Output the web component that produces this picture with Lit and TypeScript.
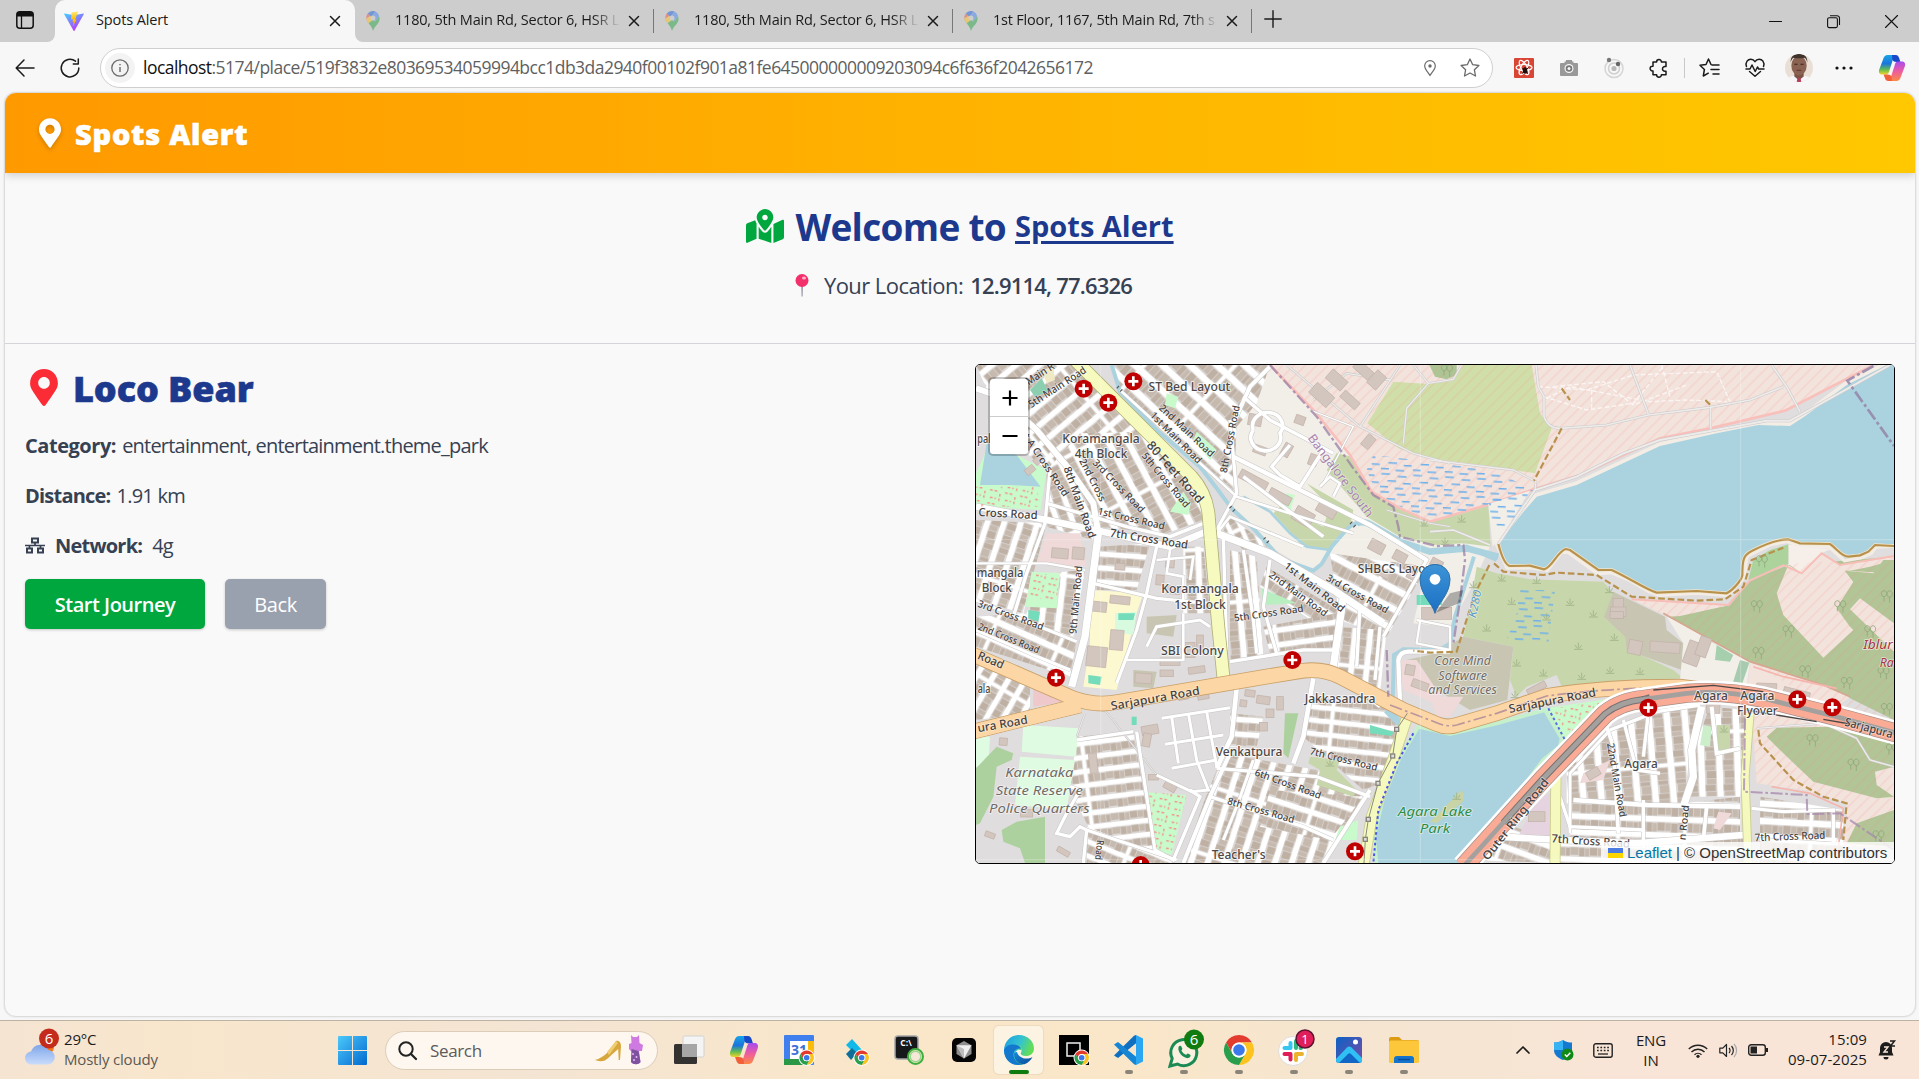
import { LitElement, html, css, svg } from "lit";
import { customElement } from "lit/decorators.js";

type Line = [string, number];
type Label = [string, number, number, number, number, number, string?];

/* ---------- map data (three units per screen pixel) ---------- */

const blocks: [string, number, number][] = [
  ["18,15 320,15 520,215 330,400 230,330 170,280 60,110", -40, 46],
  ["330,220 520,215 700,400 700,480 590,520 380,500 230,330", 62, 52],
  ["230,330 380,500 370,540 230,500", 70, 44],
  ["430,15 900,15 860,130 800,200 790,390 450,90", 43, 56],
  ["18,480 230,490 160,760 18,720", -72, 48],
  ["18,770 160,760 320,840 300,950 18,860", 24, 52],
  ["18,900 180,980 180,1060 18,1080", -60, 44],
  ["230,640 345,630 310,830 160,780", -83, 50],
  ["780,470 900,560 820,570 760,510", 66, 34],
  ["385,560 540,550 500,690 380,690", 4, 42],
  ["640,560 700,560 720,760 640,760", 88, 48],
  ["780,570 860,590 880,890 780,900", 85, 50],
  ["890,620 1120,760 1070,810 870,680", 33, 46],
  ["880,800 1100,760 1100,860 900,880", -8, 44],
  ["1080,580 1370,620 1250,830 1110,780", 28, 54],
  ["1090,800 1250,810 1230,1000 1090,930", 96, 46],
  ["1010,1010 1270,1040 1290,1120 1230,1270 1180,1290 1000,1130", 6, 40],
  ["780,1060 880,1070 860,1160 780,1160", 4, 44],
  ["320,1130 490,1115 550,1470 360,1410 300,1290", -7, 42],
  ["350,1400 620,1500 600,1509 350,1509", 22, 40],
  ["760,1180 1040,1230 1180,1310 1060,1509 640,1509 700,1330", 108, 48],
  ["900,1290 1180,1310 1080,1440 870,1400", 18, 46],
  ["1790,1230 1920,1110 2130,1040 2210,1040 2160,1180 2140,1340 1960,1330 1790,1330", 85, 54],
  ["1800,1330 2140,1330 2310,1310 2310,1430 1800,1440", 2, 48],
  ["1770,1450 2330,1430 2330,1509 1770,1509", 2, 46],
  ["2220,1040 2330,1050 2310,1310 2160,1310 2170,1170", 88, 54],
  ["2370,1310 2620,1350 2620,1509 2370,1509", 3, 52],
  ["1500,1500 1630,1400 1760,1440 1760,1509", 20, 48],
];

const beigeGround = "800,200 900,15 1040,150 1140,285 1205,395 1290,445 1400,500 1560,560 1500,690 1440,800 1330,790 1370,620 1080,580 1030,640 900,560 790,440";

const fills: [string, string][] = [
  ["#f3e3dd", "900,15 1030,150 1140,285 1205,395 1290,445 1380,485 1550,435 1700,385 1830,345 2070,235 2220,205 2445,152 2710,15"],
  ["#d0dfa9", "1270,65 1375,72 1450,62 1480,15 1685,15 1710,160 1745,205 1695,340 1580,322 1380,295 1285,265 1192,190"],
  ["#adc594", "1378,15 1460,15 1460,45 1430,58 1395,50"],
  ["#c8d7ab", "1100,280 1145,290 1205,395 1290,445 1380,485 1555,435 1562,560 1480,550 1390,555 1290,530 1190,470 1070,330"],
  ["#c8d7ab", "1010,370 1150,450 1140,500 1080,570 1000,560 910,460 930,440 1060,500 1080,440"],
  ["#c8d7ab", "1520,620 1580,640 1680,658 1900,665 1930,700 1965,830 1970,865 2110,930 2140,955 2000,962 1780,990 1760,945 1670,980 1640,1010 1620,960 1630,860 1480,830 1500,740"],
  ["#c8c6b3", "1930,695 2085,770 2090,810 2140,850 2135,930 1970,870 1965,830 1902,770"],
  ["#c8c6b3", "1480,830 1630,860 1612,1020 1500,1050 1400,990 1330,960 1310,900 1400,880"],
  ["#f2efe9", "2090,770 2140,790 2230,850 2340,905 2330,980 2130,960 2140,850"],
  ["#a6cfae", "2240,855 2290,885 2280,905 2235,900"],
  ["#a6cbae", "2310,900 2338,908 2310,990 2285,980"],
  ["#b1c597", "2095,770 2280,735 2340,660 2455,615 2772,590 2772,1080 2560,975 2340,905"],
  ["#f3e3dd", "1985,718 2280,735 2130,768 2095,770"],
  ["#f3e3dd", "2455,615 2495,640 2555,580 2610,615 2772,590 2772,600 2700,620 2640,632 2625,632 2650,665 2600,745 2640,800 2650,810 2560,893 2440,765 2420,700"],
  ["#f3e3dd", "2670,715 2772,790 2772,875 2640,748"],
  ["#f3e3dd", "2625,632 2772,640 2772,690 2745,715 2690,670"],
  ["#b1c597", "2650,665 2745,715 2772,690 2772,600 2740,600 2710,640 2625,632"],
  ["#f6eee8", "2455,553 2580,568 2555,580 2495,640 2455,612"],
  ["#acd39c", "2455,553 2455,612 2335,660 2350,600 2400,570"],
  ["#f3e3dd", "2340,905 2560,975 2640,1010 2600,1040 2330,1010"],
  ["#f3e3dd", "2345,1060 2772,1110 2772,1460 2620,1460 2630,1330 2500,1290 2360,1270"],
  ["#b1c597", "2390,1130 2420,1103 2580,1100 2772,1150 2772,1220 2715,1235 2720,1275 2772,1310 2720,1315 2530,1265 2440,1180"],
  ["#b1c597", "2660,1390 2772,1350 2772,1460 2630,1450"],
  ["#c8facc", "18,340 50,270 130,280 230,330 212,450 18,440"],
  ["#aad3df", "50,250 140,285 212,380 120,375 30,375"],
  ["#efd9d9", "230,520 330,520 350,620 200,612"],
  ["#efc8cc", "190,975 240,960 290,1025 190,1040"],
  ["#c8facc", "185,635 270,640 260,745 165,740"],
  ["#c8facc", "680,215 740,270 720,300 670,240"],
  ["#c8facc", "640,395 600,455 655,465 662,430"],
  ["#c8facc", "590,100 625,110 615,145 585,135"],
  ["#8ccfb0", "180,90 215,55 235,95 195,110"],
  ["#efe9c4", "215,30 250,20 255,60 230,70"],
  ["#fcf8cf", "360,690 520,700 500,760 440,990 340,980 360,850"],
  ["#d8fadf", "435,760 500,755 490,825 435,815"],
  ["#74dcba", "445,760 495,760 490,780 445,780"],
  ["#74dcba", "175,750 210,755 205,785 175,775"],
  ["#74dcba", "355,945 395,950 390,975 355,970"],
  ["#c8c6b3", "530,770 620,765 610,830 530,820"],
  ["#c8c6b3", "490,930 560,935 550,985 490,980"],
  ["#dffce2", "160,1095 325,1105 318,1190 155,1175"],
  ["#dffce2", "150,1190 315,1200 290,1350 135,1335"],
  ["#dffce2", "18,1125 60,1130 55,1220 18,1220"],
  ["#add19e", "18,1225 80,1160 130,1180 125,1200 80,1220 70,1310 30,1390 18,1395"],
  ["#add19e", "95,1410 140,1385 225,1370 225,1509 165,1509 150,1465 100,1445"],
  ["#c8facc", "530,1297 650,1305 605,1485 550,1470"],
  ["#add19e", "945,1060 985,1060 955,1195 940,1180"],
  ["#74dcba", "1200,1095 1270,1115 1265,1128 1200,1120"],
  ["#74dcba", "485,1070 500,1070 500,1095 485,1095"],
  ["#c8d7ab", "1020,1190 1110,1200 1100,1230 1160,1290 1150,1310 1040,1275 1050,1230 1015,1210"],
  ["#c8facc", "1110,1400 1165,1380 1160,1440 1095,1440"],
  ["#b9efc0", "875,685 980,730 880,735"],
  ["#c8facc", "950,400 975,405 960,455 932,440"],
  ["#74dcba", "1340,705 1420,705 1415,735 1340,735"],
  ["#c8facc", "1725,1045 1960,1010 1850,1110 1780,1140"],
  ["#cdeecb", "2200,1095 2225,1100 2220,1160 2190,1155"],
  ["#c8d7ab", "2240,1095 2280,1095 2280,1170 2240,1170"],
  ["#e6d3e0", "1700,1320 1740,1300 1740,1430 1640,1440"],
  ["#efd9d9", "1285,900 1340,900 1440,1050 1300,990"],
  ["#efd9d9", "1380,1010 1480,1010 1440,1070 1400,1070"],
  ["#efd9d9", "1840,1240 1920,1200 1900,1260 1830,1270"],
  ["#efd9d9", "2245,1355 2285,1360 2250,1410 2230,1405"],
];

const bigLake =
  "M1585,550 L1665,450 1700,410 1820,375 1980,300 2070,258 2240,220 2365,195 2460,198 2510,165 2630,75 2750,15 2790,0 2790,552 2715,555 2700,575 2670,588 2625,596 2580,555 2490,550 2450,538 2400,548 2325,585 2317,650 2270,700 2180,693 2070,700 2040,690 1980,655 1925,632 1885,635 1795,570 1770,572 1730,625 1680,617 1615,618Z";
const agaraLake =
  "M1345,1100 L1440,1122 1580,1090 1725,1050 1775,1135 1770,1160 1720,1200 1480,1520 1220,1520 1212,1430 1240,1310 1290,1190Z";
const shore =
  "M1585,552 C1595,590 1605,615 1620,618 L1680,617 1722,628 C1745,625 1765,570 1788,567 L1800,570 1885,630 1925,630 C1980,655 2030,690 2060,698 L2180,693 2270,700 C2290,690 2315,660 2317,645 C2317,600 2320,585 2345,573 C2400,545 2430,538 2455,538 L2490,550 2580,552 C2600,565 2615,590 2635,590 L2670,586 2695,575 2715,555 2772,558";

const rivers: Line[] = [
  ["M425,15 L450,95 560,210 690,320 740,385 785,445 850,505 900,560 930,595 1030,632 1055,612 1085,560 1130,508 Q1165,475 1200,492 L1290,545 1380,575 1490,560 1580,600", 12],
  ["M1160,490 Q1180,480 1210,498 L1290,545 1380,575 1490,565 1585,590", 20],
  ["M820,410 L900,455 960,520 1010,560 1080,570", 8],
  ["M1512,590 L1490,660 1455,770 1440,850 1410,870 1300,868 1272,885 1268,1020", 12],
  ["M1250,1050 L1300,1100", 22],
];

const whiteRoads: Line[] = [
  ["M18,85 L90,110 200,210 300,330 370,430 385,520", 18],
  ["M18,440 L230,480 420,520 600,560 720,510", 20],
  ["M230,430 L470,500 600,530 700,490", 10],
  ["M240,330 L225,490 170,640 130,770", 10],
  ["M385,520 L345,830 305,980", 22],
  ["M18,610 L230,610 345,630", 7],
  ["M18,720 L160,780 320,845", 9],
  ["M18,810 L190,885 300,930", 9],
  ["M740,520 L900,580 1090,690 1240,790", 22],
  ["M450,90 L800,410 1150,520", 8],
  ["M740,520 L780,470 1000,560", 8],
  ["M790,290 L1000,395 1200,495 1370,600", 13],
  ["M820,110 L900,180 1090,280", 10],
  ["M780,180 L800,400 740,510", 10],
  ["M900,20 L840,80 790,190", 12],
  ["M850,210 a45,40 0 1 0 80,10 a45,40 0 1 0 -80,-10", 11],
  ["M960,255 L905,320 930,345 990,380 1060,270", 10],
  ["M1050,380 L1080,350 1110,370 1090,410", 8],
  ["M820,350 L1060,530", 10],
  ["M1020,150 L1150,200 1060,370", 4],
  ["M1200,495 L1370,600 1240,830", 10],
  ["M820,570 L850,780 860,880", 10],
  ["M760,530 L770,870", 10],
  ["M900,600 L880,740 920,880", 10],
  ["M1120,710 L1090,920", 22],
  ["M1170,740 L1160,920", 10],
  ["M1230,800 L1215,960", 10],
  ["M780,905 L1000,870 1090,870", 10],
  ["M370,670 L560,715 710,730", 10],
  ["M560,560 L530,700 500,810 440,970", 10],
  ["M530,860 L560,800 690,780 720,800", 9],
  ["M640,760 L640,900 470,900", 8],
  ["M600,570 L590,640 640,650 640,720", 8],
  ["M560,600 L670,590 660,660", 8],
  ["M800,985 L785,1130 740,1225", 14],
  ["M575,1075 L780,1043", 9],
  ["M585,1153 L760,1125", 9],
  ["M605,1225 L740,1200", 9],
  ["M605,1070 L625,1210", 9],
  ["M655,1060 L680,1200 715,1290 665,1295 560,1245", 9],
  ["M710,1055 L740,1220", 9],
  ["M500,1115 L555,1470 610,1500 690,1310 660,1290", 10],
  ["M320,1140 L490,1115", 10],
  ["M300,1280 L330,1290 290,1360 260,1420 300,1430 330,1400 350,1410 620,1500", 10],
  ["M350,1410 L340,1509", 10],
  ["M1030,955 L1000,1130 970,1210", 14],
  ["M740,1225 L1040,1250 1200,1310", 10],
  ["M780,1180 L720,1310 640,1509", 12],
  ["M720,1310 L1000,1400 1090,1440", 10],
  ["M850,1200 L800,1340 760,1440", 9],
  ["M1200,1290 L1060,1509", 12],
  ["M1090,930 L1230,1040", 10],
  ["M1290,1030 L1285,900 Q1290,875 1315,875 L1440,875", 13],
  ["M1340,780 L1440,800 1440,870 1340,850 1350,785", 7],
  ["M1910,1100 L1930,1160 1945,1420", 11],
  ["M1960,1080 L2000,1230 2070,1240", 10],
  ["M2035,1060 L2020,1190", 10],
  ["M1920,1110 L2060,1055 2190,1035", 10],
  ["M1920,1110 L1800,1240 1800,1420", 9],
  ["M2195,1040 L2165,1170 2170,1250 2140,1340", 22],
  ["M2225,1040 L2240,1180 2310,1165", 12],
  ["M1810,1320 L2030,1335 2310,1340", 14],
  ["M2020,1320 L2020,1509", 10],
  ["M1770,1310 L1800,1400 2020,1410", 10],
  ["M1590,1430 L1770,1440 2000,1450 2320,1425", 20],
  ["M2210,1340 L2200,1440", 11],
  ["M2345,1345 L2440,1355 2590,1350 2590,1450", 10],
  ["M2360,1425 L2600,1440", 12],
];

const greyTracks: Line[] = [
  ["M1698,15 L1705,80 1722,110 1722,170 Q1735,205 1770,205 L1910,195 2035,165 2220,142 2340,120 2440,80", 6],
  ["M1980,15 L2035,162", 6],
  ["M2405,15 L2450,80 2490,155", 6],
  ["M2222,142 L2222,208", 6],
  ["M1585,552 L1640,470 1695,390 1820,350 1960,280 2070,240 2390,182 2460,182 2500,160 2760,15", 7],
  ["M1380,300 L1630,330 1698,365 1695,390", 5],
  ["M1170,200 L1330,280 1440,310", 5],
  ["M1380,515 L1450,510 1560,555", 6],
  ["M950,15 L1170,200 1235,100 1290,15", 5],
  ["M1330,15 L1375,70 1310,145 1300,250", 5],
  ["M1375,70 L1450,58 1475,15", 5],
  ["M1030,120 L1130,40 1260,60", 5],
  ["M2360,1105 L2560,1090 2660,1135 2700,1200 2772,1220", 5],
  ["M1250,450 L1380,490 1440,500", 4],
  ["M400,1045 L560,1245 640,1290", 4],
  ["M345,1060 L320,1130", 4],
];

const houses: [number, number, number, number, number][] = [
  [1055, 105, 70, 40, 42], [1100, 60, 60, 36, 42], [1180, 30, 60, 30, 42], [1140, 120, 60, 26, 42],
  [1220, 60, 36, 50, 42], [1195, 245, 40, 28, -50], [1000, 470, 60, 44, 30], [1070, 450, 60, 34, 30],
  [850, 360, 90, 28, 28], [930, 410, 70, 26, 28], [855, 180, 40, 34, 10], [950, 270, 26, 40, 30],
  [540, 1110, 50, 28, -10], [530, 1140, 24, 40, 10], [600, 1280, 38, 22, 30], [550, 1252, 30, 16, 0],
  [440, 840, 40, 60, 5], [380, 890, 60, 60, 6], [385, 740, 50, 30, 6], [450, 720, 60, 24, 6],
  [520, 955, 50, 30, 4], [1400, 760, 90, 36, 0], [1945, 745, 32, 60, 0], [1945, 755, 46, 28, 0],
  [1995, 862, 40, 42, 12], [2085, 862, 90, 32, 4], [1940, 765, 40, 20, 0], [1700, 985, 60, 20, -28],
  [2170, 880, 46, 70, 20], [2200, 860, 34, 60, 20], [2390, 985, 60, 30, 2], [2480, 1000, 80, 22, 14],
  [2230, 1040, 40, 40, 0], [100, 1145, 24, 22, 5], [170, 1360, 36, 22, 0], [60, 1425, 30, 16, 20],
  [280, 1475, 40, 16, 30], [370, 1210, 24, 60, -6], [880, 1020, 40, 24, 8], [930, 1030, 20, 40, 0],
  [1320, 930, 28, 30, 10], [1350, 975, 50, 24, 20], [1700, 1370, 50, 30, 0], [1870, 1240, 40, 26, -30],
  [270, 580, 50, 30, 5], [325, 580, 36, 36, 5], [1220, 560, 46, 34, 28], [1290, 590, 40, 30, 28],
  [990, 180, 30, 26, 20], [1030, 300, 26, 34, 20], [870, 270, 40, 24, 20],
  [600, 610, 26, 26, 5], [610, 690, 40, 24, 5], [570, 660, 24, 30, 5], [660, 870, 30, 46, 0],
  [690, 850, 20, 50, 0], [600, 905, 60, 22, 0], [590, 940, 40, 20, 0], [680, 930, 50, 20, -8],
  [640, 1010, 30, 18, -10], [700, 1010, 34, 16, -10], [840, 1000, 30, 20, 8], [900, 1060, 24, 26, 0],
  [880, 1100, 24, 26, 0], [820, 1030, 20, 20, 8], [1330, 650, 40, 22, 28], [1400, 610, 36, 24, 28],
  [1240, 640, 40, 22, 28], [450, 620, 30, 20, 4], [180, 330, 30, 20, -40], [205, 300, 28, 20, -40],
];

const places: Label[] = [
  ["ST Bed Layout", 658, 93, 0, 245, 37],
  ["Koramangala", 393, 248, 0, 232, 37],
  ["4th Block", 393, 293, 0, 158, 37],
  ["pal", 42, 248, 0, 40, 37],
  ["mangala", 90, 650, 0, 140, 37],
  ["Block", 80, 697, 0, 90, 37],
  ["Koramangala", 690, 700, 0, 232, 37],
  ["1st Block", 690, 747, 0, 155, 37],
  ["SHBCS Layout", 1283, 640, 0, 240, 37],
  ["SBI Colony", 667, 885, 0, 188, 37],
  ["Jakkasandra", 1110, 1028, 0, 212, 37],
  ["Venkatpura", 837, 1187, 0, 200, 37],
  ["Teacher's", 806, 1496, 0, 162, 37],
  ["ala", 42, 998, 0, 38, 37],
  ["Agara", 2013, 1223, 0, 100, 37],
  ["Agara", 2223, 1020, 0, 102, 35],
  ["Agara", 2362, 1020, 0, 102, 35],
  ["Flyover", 2362, 1066, 0, 122, 35],
];

const streets: Label[] = [
  ["80 Feet Road", 614, 348, 48, 235, 37],
  ["2nd Main Road", 650, 222, 43, 215, 30],
  ["1st Main Road", 618, 243, 45, 205, 30],
  ["8th Cross Road", 780, 247, -79, 205, 30],
  ["5th Cross Road", 587, 370, 50, 205, 30],
  ["8th Main Road", 328, 437, 70, 225, 32],
  ["2nd Cross", 368, 370, 63, 140, 30],
  ["3rd Cross Road", 446, 388, 46, 210, 30],
  ["1st Cross Road", 484, 486, 13, 205, 30],
  ["7th Cross Road", 537, 548, 9, 236, 34],
  ["t A Cross Road", 228, 325, 56, 220, 30],
  ["Cross Road", 114, 473, 3, 177, 34],
  ["5th Main Road", 262, 92, -33, 200, 32],
  ["Main R", 210, 52, -33, 96, 32],
  ["3rd Cross Road", 122, 776, 20, 208, 30],
  ["2nd Cross Road", 116, 845, 22, 196, 30],
  ["9th Main Road", 318, 730, -85, 205, 31],
  ["1st Main Road", 1033, 692, 38, 222, 31],
  ["2nd Main Road", 985, 712, 36, 208, 30],
  ["3rd Cross Road", 1162, 712, 29, 208, 30],
  ["5th Cross Road", 896, 770, -8, 210, 30],
  ["Sarjapura Road", 556, 1027, -10, 270, 35],
  ["Road", 62, 912, 23, 82, 35],
  ["ura Road", 98, 1104, -10, 152, 35],
  ["7th Cross Road", 1121, 1208, 14, 208, 30],
  ["6th Cross Road", 954, 1282, 20, 210, 30],
  ["8th Cross Road", 873, 1361, 16, 208, 30],
  ["Road", 388, 1480, 95, 60, 30],
  ["Sarjapura Road", 1747, 1034, -11, 265, 35],
  ["Outer Ring Road", 1638, 1389, -52, 300, 34],
  ["Sarjapura", 2696, 1116, 15, 148, 35],
  ["22nd Main Road", 1940, 1270, 80, 225, 30],
  ["n Road", 2142, 1398, -84, 105, 30],
  ["7th Cross Road", 1862, 1455, 4, 236, 34],
  ["7th Cross Road", 2460, 1440, -2, 212, 32],
];

const accents: Label[] = [
  ["Bangalore South", 1110, 358, 53, 300, 37, "violet"],
  ["Karnataka", 208, 1252, 0, 205, 39, "estate"],
  ["State Reserve", 208, 1305, 0, 262, 39, "estate"],
  ["Police Quarters", 208, 1359, 0, 302, 39, "estate"],
  ["Core Mind", 1478, 915, 0, 170, 36, "estate"],
  ["Software", 1478, 960, 0, 146, 36, "estate"],
  ["and Services", 1478, 1003, 0, 206, 36, "estate"],
  ["Agara Lake", 1395, 1367, 0, 222, 40, "park"],
  ["Park", 1395, 1419, 0, 92, 40, "park"],
  ["K280", 1516, 742, -78, 84, 33, "stream"],
  ["Iblur", 2724, 867, 0, 88, 38, "reserve"],
  ["Ra", 2750, 920, 0, 42, 38, "reserve"],
];

const hospitals = [
  [341, 86], [415, 128], [490, 64], [258, 953], [967, 900], [1155, 1474],
  [512, 1515], [2035, 1043], [2482, 1018], [2587, 1042],
];

const trees = [
  [2360, 740], [2455, 815], [2365, 880], [2505, 935], [2630, 970], [2527, 1142], [2650, 1215],
  [2725, 1430], [2750, 1048], [1430, 32], [2375, 605], [2610, 740], [2750, 710], [2700, 815], [2740, 940], [2765, 1170],
];
const tufts = [
  [1475, 478], [1425, 545], [1625, 725], [1800, 728], [1870, 763], [1550, 805], [1730, 772], [1640, 910],
  [1825, 860], [1933, 833], [1920, 932], [2010, 935], [1835, 950], [1720, 940], [1595, 655], [1700, 662],
  [1918, 690], [1635, 1005], [2262, 1108], [1460, 1310], [1362, 490], [1080, 1210], [1510, 675],
];

const label = ([t, x, y, a, len, size, cls]: Label) => svg`<text class=${cls ?? "name"} x=${x} y=${y} font-size=${size}
  textLength=${len} lengthAdjust="spacingAndGlyphs" transform=${`rotate(${a} ${x} ${y - (a ? 10 : 0)})`}>${t}</text>`;

const stroke = (list: Line[], color: string, extra = 0) =>
  list.map(([d, w]) => svg`<path d=${d} fill="none" stroke=${color} stroke-width=${w + extra}></path>`);

const wide = (d: string, w: number, color: string, casing: string) => svg`
  <path d=${d} fill="none" stroke=${casing} stroke-width=${w + 5}></path>
  <path d=${d} fill="none" stroke=${color} stroke-width=${w}></path>`;

/* Rows of houses between parallel lanes, tiled over each quarter. */
const housePattern = (i: number, angle: number, pitch: number) => {
  const lane = pitch * 0.34;
  const h = pitch - lane - 5;
  const widths = [16, 22, 13, 26, 18, 14, 24, 17, 21, 15];
  let x = 0;
  const rects = widths.map((w, k) => {
    const r = svg`<rect x=${x + 1} y=${lane + 2 + (k % 3)} width=${w - 2} height=${h - (k % 4)} fill=${k % 2 ? "#c6b9ae" : "#bfb0a4"}></rect>`;
    x += w;
    return r;
  });
  return svg`<pattern id=${"q" + i} patternUnits="userSpaceOnUse" width=${x + 14} height=${pitch}
    patternTransform=${`rotate(${angle})`}>
    <rect width=${x + 14} height=${pitch} fill="#dddad8"></rect>${rects}
    <rect width=${x + 14} height=${lane} fill="#fff"></rect>
    <rect x=${x + 2} width="10" height=${pitch} fill="#fff"></rect></pattern>`;
};

const road80 = "M310,-5 L425,110 540,225 665,350 Q714,405 717,480 L745,800 760,950";
const sarjapura = "M0,880 L310,1015 Q380,1040 450,1025 L900,948 1000,932 Q1060,925 1110,950 L1300,1050 1400,1092 Q1430,1105 1460,1095 L1580,1060 1730,1008 Q1900,980 2130,980 L2230,992";
const sarjapuraW = "M0,1117 L330,1036";
const ring = "M1480,1520 L1720,1255 1905,1062 Q1950,1025 2020,1018 L2150,1000 Q2260,990 2380,1015 L2600,1070 2790,1122";

@customElement("street-map")
class StreetMap extends LitElement {
  static styles = css`
    :host { display: block; width: 918px; height: 498px; }
    svg { display: block; width: 918px; height: 498px; }
    text { font-family: "Noto Sans", "Open Sans", sans-serif; text-anchor: middle; paint-order: stroke; stroke-linejoin: round; }
    .name { fill: #4a4848; font-weight: 500; stroke: rgba(255, 255, 255, 0.75); stroke-width: 6px; }
    .street { fill: #434141; font-weight: 500; stroke: rgba(255, 255, 255, 0.45); stroke-width: 5px; }
    .violet { fill: #a884ad; stroke: rgba(255, 255, 255, 0.5); stroke-width: 4px; }
    .estate { fill: #6f6b67; font-style: italic; stroke: rgba(255, 255, 255, 0.6); stroke-width: 5px; }
    .park { fill: #2f8d43; font-style: italic; stroke: rgba(255, 255, 255, 0.5); stroke-width: 5px; }
    .stream { fill: #5a9bc8; font-style: italic; stroke: rgba(255, 255, 255, 0.6); stroke-width: 4px; }
    .reserve { fill: #a8323f; font-style: italic; stroke: rgba(255, 255, 255, 0.6); stroke-width: 5px; }
  `;
  render() {
    return html`<svg viewBox="18 15 2754 1494">
      <defs>
        ${blocks.map(([, a, p], i) => housePattern(i, a, p))}
        <pattern id="hatch" patternUnits="userSpaceOnUse" width="24" height="24" patternTransform="rotate(45)">
          <rect width="5" height="24" fill="#f08c82" opacity=".17"></rect>
        </pattern>
        <pattern id="wet" patternUnits="userSpaceOnUse" width="96" height="54" patternTransform="rotate(3)">
          <path d="M2,6h26M52,12h26M22,26h26M68,32h24M0,44h24M44,48h26" stroke="#6cb0ec" stroke-width="4.5"></path>
        </pattern>
        <pattern id="play" patternUnits="userSpaceOnUse" width="46" height="40" patternTransform="rotate(12)">
          <path d="M2,8h26M34,14v22M6,30h18" stroke="#f78d85" stroke-width="4" stroke-dasharray="8 6"></path>
        </pattern>
        <linearGradient id="pin" x1="0" y1="0" x2="0" y2="1">
          <stop offset="0" stop-color="#3d94d6"></stop><stop offset="1" stop-color="#1b6fc4"></stop>
        </linearGradient>
      </defs>
      <rect x="18" y="15" width="2754" height="1494" fill="#dfdddd"></rect>
      <polygon points=${beigeGround} fill="#f2efe9"></polygon>
      ${blocks.map(([p], i) => svg`<polygon points=${p} fill=${`url(#q${i})`}></polygon>`)}
      ${fills.map(([c, p]) => svg`<polygon points=${p} fill=${c}></polygon>`)}
      <polygon points="900,15 1030,150 1140,285 1205,395 1290,445 1380,485 1550,435 1700,385 1830,345 2070,235 2220,205 2445,152 2710,15" fill="url(#hatch)"></polygon>
      <path d="M900,15 L1030,150 1140,285 1205,395 1290,445 1380,485 1550,435 1700,385 1830,345 2070,235 2220,205 2445,152 2710,15" fill="none" stroke="#f9c0bb" stroke-width="8"></path>
      <polygon points="1985,718 2280,735 2455,612 2772,590 2772,1460 2620,1460 2630,1330 2500,1290 2360,1270 2345,1060 2600,1060 2340,905 2095,770" fill="url(#hatch)"></polygon>
      <path d="M1985,718 L2275,735 2340,662 2440,615 2495,640 2555,580 2610,615 2772,588" fill="none" stroke="#f7bdb6" stroke-width="6"></path>
      <path d="M2080,760 L2340,905 2560,975 2640,1010" fill="none" stroke="#d7a68f" stroke-width="5"></path>
      <path d="M2350,920 L2440,950 2600,985M2405,1280 L2520,1300 2620,1345 2600,1500" fill="none" stroke="#f5b5ad" stroke-width="5"></path>
      <polygon points="1210,285 1380,305 1580,335 1690,392 1550,435 1390,480 1300,445 1220,400 1190,330" fill="url(#wet)"></polygon>
      <polygon points="1555,432 1680,392 1600,520 1568,560" fill="#f2efe9"></polygon>
      <polygon points="1555,420 1680,392 1620,500 1568,500" fill="url(#wet)"></polygon>
      <polygon points="1650,690 1755,690 1735,850 1610,840 1640,760" fill="url(#wet)"></polygon>
      <g fill="none" stroke="#fff" stroke-width="4" stroke-dasharray="14 7" opacity=".7">
        <path d="M1705,80 L1850,90 1990,45 2240,35 2280,125"></path>
        <path d="M1730,115 L1800,80 2040,125 2150,120 2270,125"></path>
        <path d="M1722,110 L1850,150 1990,130 2080,20"></path>
        <path d="M1750,80 L1900,65 1990,135 2150,75"></path>
        <path d="M1865,90 V150M2075,15 L2100,110"></path>
      </g>
      <path d=${bigLake} fill="#abd3df" stroke="#f4ede6" stroke-width="22"></path>
      <path d=${bigLake} fill="#abd3df"></path>
      <path d=${agaraLake} fill="#abd3df" stroke="#c5f0cb" stroke-width="12"></path>
      <polygon points="1380,1385 1475,1290 1482,1305 1478,1325 1400,1390" fill="#c8d3a6"></polygon>
      ${stroke(greyTracks, "#cbc8c8", 2)}
      ${stroke(greyTracks, "#eeebeb", -1)}
      ${houses.map(([x, y, w, h, a]) => svg`<rect x=${x - w / 2} y=${y - h / 2} width=${w} height=${h} fill="#d3c6bf" stroke="#c0b0a6" stroke-width="2" transform=${`rotate(${a} ${x} ${y})`}></rect>`)}
      ${stroke(rivers, "#abd3df")}
      ${stroke(whiteRoads, "#c9c7c6", 3)}
      ${stroke(whiteRoads, "#fff")}
      <polygon points="185,640 270,645 260,720 165,710" fill="url(#play)"></polygon>
      <polygon points="535,1297 650,1305 605,1480 555,1465" fill="url(#play)"></polygon>
      <polygon points="18,380 200,380 212,440 18,440" fill="url(#play)"></polygon>
      <polygon points="1745,1045 1940,1020 1850,1100 1790,1120" fill="url(#play)"></polygon>
      ${wide("M1315,1060 L1272,1190 1205,1370 1180,1520", 30, "#f5f9bd", "#c9cb8e")}
      ${wide("M1758,1230 L1755,1520", 28, "#f5f9bd", "#c9cb8e")}
      ${wide("M2340,1060 L2325,1250 2335,1520", 22, "#f5f9bd", "#c9cb8e")}
      ${wide(road80, 36, "#f7fabf", "#b0b17a")}
      ${wide(sarjapuraW, 42, "#fcd6a4", "#c9a06a")}
      ${wide(sarjapura, 42, "#fcd6a4", "#c9a06a")}
      <path d="M10,1115 L330,1036" stroke="#fcd6a4" stroke-width="42"></path>
      <path d="M1260,1035 L1400,1088 Q1430,1102 1460,1095 L1580,1060 1730,1008 Q1900,985 2120,982" fill="none" stroke="#a6809a" stroke-width="5" stroke-dasharray="38 10 8 10" opacity=".75"></path>
      <path d=${ring} fill="none" stroke="#fff" stroke-width="72"></path>
      <path d=${ring} fill="none" stroke="#a38d86" stroke-width="57"></path>
      <path d=${ring} fill="none" stroke="#f9ab95" stroke-width="53"></path>
      <path d="M1600,1388 L1720,1255 1905,1062 Q1950,1025 2020,1018 L2040,1012" fill="none" stroke="#77716f" stroke-width="20"></path>
      <path d=${ring} fill="none" stroke="#a3a09e" stroke-width="14"></path>
      <path d="M2050,990 L2230,976 2380,995M2330,1050 L2540,1085M2560,1078 L2640,1092" fill="none" stroke="#4b4746" stroke-width="4"></path>
      <path d="M2325,1075 L2322,1295 2510,1305 2512,1362 2610,1360 2772,1470" fill="none" stroke="#a98cb0" stroke-width="6" stroke-dasharray="36 8 8 8" opacity=".8"></path>
      <path d="M900,15 L1040,170 1150,325 1210,405 1270,440 1285,500 1290,530 1400,558 1480,555 1485,600 1470,720 1450,850 M1250,870 L1255,1010" fill="none" stroke="#9a7fa6" stroke-width="7" stroke-dasharray="34 9 9 9" opacity=".75"></path>
      <path d="M2710,18 L2632,62 2772,258" fill="none" stroke="#9384a8" stroke-width="8" stroke-dasharray="38 9 9 9" opacity=".85"></path>
      <path d=${shore} fill="none" stroke="#f1e6cf" stroke-width="11"></path>
      <path d=${shore} fill="none" stroke="#b8924c" stroke-width="6.5"></path>
      <g fill="none" stroke="#b8924c" stroke-width="6.5" stroke-dasharray="20 9">
        <path d="M1572,610 L1600,635 1720,645 1760,638 1880,645 1985,710 2180,722 2265,718 2320,680 2345,600 2440,563"></path>
        <path d="M1558,615 L1515,700 1480,810 1460,875 1380,878 1330,872"></path>
        <path d="M1775,205 L1692,362"></path>
        <path d="M1775,85 L1800,120M2206,120 L2222,136"></path>
        <path d="M2365,1110 L2370,1150 2470,1260 2560,1310 2630,1330 2620,1440"></path>
      </g>
      <path d="M1330,1120 L1280,1210 1225,1350 1210,1509" fill="none" stroke="#4a55ec" stroke-width="6" stroke-dasharray="8 8"></path>
      <path d="M1735,1045 L1785,1140" fill="none" stroke="#5a6bea" stroke-width="6" stroke-dasharray="8 8"></path>
      <path d="M1312,1060 L1280,1108 1268,1188 1224,1270 1195,1378 1186,1438 1182,1509" fill="none" stroke="#8c8c80" stroke-width="3"></path>
      ${[[1280, 1108], [1268, 1188], [1224, 1270], [1195, 1378], [1186, 1438]].map(([x, y]) => svg`<rect x=${x - 6} y=${y - 6} width="12" height="12" fill="#ddd" stroke="#88867c" stroke-width="4"></rect>`)}
      ${[[450, 88], [788, 448], [890, 542], [1150, 495]].map(([x, y]) => svg`<path d=${`M${x - 10},${y - 3} l7,-7 M${x},${y + 7} l7,-7`} stroke="#555" stroke-width="3.5"></path>`)}
      ${trees.map(([x, y]) => svg`<path d=${`M${x - 8},${y + 14} v-14 m0,0 a8,9 0 1 1 .1,0 M${x + 9},${y + 18} v-16 m0,0 a8,10 0 1 1 .1,0`} fill="none" stroke="#8fa87c" stroke-width="2.5"></path>`)}
      ${tufts.map(([x, y]) => svg`<path d=${`M${x - 13},${y + 8} h26 M${x},${y + 6} v-18 M${x - 3},${y + 5} l-7,-10 M${x + 3},${y + 5} l7,-10`} fill="none" stroke="#9db185" stroke-width="2.5"></path>`)}
      <path d="M392,15 V1509M1351,15 V1509M2312,15 V1509M18,539 H2772M18,1499 H2772" stroke="#fff" stroke-width="2" opacity=".4"></path>
      ${streets.map((l) => label([l[0], l[1], l[2], l[3], l[4], l[5], "street"]))}
      ${places.map(label)}
      ${accents.map(label)}
      ${hospitals.map(([x, y]) => svg`<circle cx=${x} cy=${y} r="27" fill="#bf0000"></circle><path d=${`M${x - 15},${y} h30 M${x},${y - 15} v30`} stroke="#fff" stroke-width="8"></path>`)}
      <path d="M1398,758 L1440,700 1480,690 1470,728Z" fill="#000" opacity=".28"></path>
      <path d="M1395,760 C1388,730 1350,705 1350,657 A45,44 0 0 1 1440,657 C1440,705 1402,730 1395,760Z" fill="url(#pin)" stroke="#2c6ea6" stroke-width="3"></path>
      <circle cx="1395" cy="658" r="16" fill="#fff"></circle>
    </svg>`;
  }
}

/* ---------- icons ---------- */

const pinPath = "M172.268 501.67C26.97 291.031 0 269.413 0 192 0 85.961 85.961 0 192 0s192 85.961 192 192c0 77.413-26.97 99.031-172.268 309.67-9.535 13.774-29.93 13.773-39.464 0zM192 272c44.183 0 80-35.817 80-80s-35.817-80-80-80-80 35.817-80 80 35.817 80 80 80z";
const mapPath = "M288 0c-69.59 0-126 56.41-126 126 0 56.26 82.35 158.8 113.9 196.02 6.39 7.54 17.82 7.54 24.2 0C331.65 284.8 414 182.26 414 126 414 56.41 357.59 0 288 0zm0 168c-23.2 0-42-18.8-42-42s18.8-42 42-42 42 18.8 42 42-18.8 42-42 42zM20.12 215.95A32.006 32.006 0 0 0 0 245.66v250.32c0 11.32 11.43 19.06 21.94 14.86L160 448V214.92c-8.84-15.98-16.07-31.54-21.25-46.42L20.12 215.95zM288 359.67c-14.07 0-27.38-6.18-36.51-16.96-19.66-23.2-40.57-49.62-59.49-76.72v182l192 64V266c-18.92 27.09-39.82 53.52-59.49 76.72-9.13 10.77-22.44 16.95-36.51 16.95zm266.06-198.51L416 224v288l139.88-55.95A31.996 31.996 0 0 0 576 426.34V176.02c0-11.32-11.43-19.06-21.94-14.86z";

const icon = (w: number, h: number, body: unknown, vb = `0 0 ${w} ${h}`) =>
  html`<svg class="icon" width=${w} height=${h} viewBox=${vb} fill="none">${body}</svg>`;

const line = (d: string, w = 1.5, c = "#1b1b1b") =>
  svg`<path d=${d} stroke=${c} stroke-width=${w} stroke-linecap="round" stroke-linejoin="round"></path>`;

const closeX = icon(12, 12, line("M1.5 1.5l9 9M10.5 1.5l-9 9", 1.5));

const mapsPin = icon(14, 20, svg`<g opacity=".62">
  <path d="M7 20C6.3 16.5 3 13 1.4 10.6L5 7l4 3.5 4-5.6c1.6 4-.3 6.7-2 8.9C9.5 15.5 7.7 17.6 7 20Z" fill="#4aae62"></path>
  <path d="M1.4 10.6C-.2 8 0 4.8 1.7 2.6L6 6.2Z" fill="#ea6a5e"></path>
  <path d="M1.4 10.6C.8 9.6.4 8.6.3 7.6L4.5 4.8 7 9 2.6 12.3Z" fill="#f6c445"></path>
  <path d="M1.7 2.6A7 7 0 0 1 9.5.5L5.5 6Z" fill="#3f75d8"></path>
  <path d="M9.5.5A7 7 0 0 1 13.2 4.9L9 10.3 5.5 6Z" fill="#5f95ee"></path></g>
  <circle cx="7" cy="7" r="2.5" fill="#cdcdcd"></circle>`);

const copilot = (s: number) => icon(s, s, svg`
  <defs>
    <linearGradient id="ca" x1="0" y1="0" x2="0" y2="1"><stop offset="0" stop-color="#16a5e8"></stop><stop offset=".45" stop-color="#1b74dd"></stop><stop offset=".75" stop-color="#62bd51"></stop><stop offset="1" stop-color="#f4d22b"></stop></linearGradient>
    <linearGradient id="cb" x1="0" y1="0" x2="0" y2="1"><stop offset="0" stop-color="#a64bf0"></stop><stop offset=".5" stop-color="#ee5ca0"></stop><stop offset="1" stop-color="#fb8a45"></stop></linearGradient>
  </defs>
  <path d="M17 1H10.5C7.5 1 6.3 3 5.5 5.6L1.3 16.5C.3 20 1.5 22 5 22h3.5c2 0 2.7-1 3.3-3L16 6c.6-1.8 1.4-2.5 3-2.5Z" fill="url(#ca)"></path>
  <path d="M15 1h4c2 0 3 1.3 3.7 3.5L24 8.5h-4c-3 0-4-1-4.6-3Z" fill="#1948c9"></path>
  <path d="M13 29h6.5c3 0 4.2-2 5-4.6l4.2-10.9C29.7 10 28.5 8 25 8h-3.5c-2 0-2.7 1-3.3 3L14 24c-.6 1.8-1.4 2.5-3 2.5Z" fill="url(#cb)"></path>
  <path d="M15 29h-4c-2 0-3-1.3-3.7-3.5L6 22h4c3 0 4 1 4.6 3Z" fill="#f2603a"></path>`, "0 0 30 30");

const chromeBody = svg`
  <circle cx="15" cy="15" r="15" fill="#fff"></circle>
  <path d="M2 7.5A15 15 0 0 1 28 7.5L15 7.5A7.5 7.5 0 0 0 8.5 18.7Z" fill="#e33b2e"></path>
  <path d="M28 7.5A15 15 0 0 1 15 30L21.5 18.7A7.5 7.5 0 0 0 15 7.5Z" fill="#fcc31e"></path>
  <path d="M15 30A15 15 0 0 1 2 7.5L8.5 18.7A7.5 7.5 0 0 0 21.5 18.7Z" fill="#2a9e4b"></path>
  <circle cx="15" cy="15" r="7.5" fill="#fff"></circle><circle cx="15" cy="15" r="5.8" fill="#3b78ea"></circle>`;
const chromeMini = svg`<g transform="translate(15.5 15.5) scale(.48)"><circle cx="15" cy="15" r="17" fill="#fff"></circle>${chromeBody}</g>`;

const apps: { art: unknown; active?: boolean; dot?: boolean }[] = [
  { art: icon(30, 30, svg`<rect x="9" y="1" width="21" height="21" rx="1.5" fill="#f4f4f4" stroke="#d2d2d2"></rect><rect y="9" width="23" height="20" rx="1.5" fill="#333231"></rect><rect x="8" y="9" width="15" height="13" fill="#a6a6a6"></rect>`) },
  { art: copilot(30) },
  { art: icon(30, 30, svg`<rect width="30" height="30" rx="1" fill="#4080ee"></rect><path d="M24 6h6v18l-6 6Z" fill="#fbbc0a"></path><path d="M0 24h24v6H0Z" fill="#2b9848"></path><rect x="6" y="6" width="18" height="18" fill="#fff"></rect><text class="calendar" x="15" y="20">31</text>${chromeMini}`) },
  { art: icon(30, 30, svg`<path d="M13 4l10 11-5 6L7 10Z" fill="#12b9e8"></path><path d="M13 13l5 5-6 7-5-6Z" fill="#0f6f9b"></path>${chromeMini}`) },
  { art: icon(30, 30, svg`<rect x="1" y="1" width="23" height="23" rx="3" fill="#17181a" stroke="#a5a5a5" stroke-width="1.5"></rect><text class="prompt" x="12" y="11">C:\\</text><circle cx="21.5" cy="21.5" r="7.5" fill="#f7ead0" stroke="#3fae3f" stroke-width="2"></circle><circle cx="21.5" cy="21.5" r="5.3" fill="#f5e8d6" stroke="#9bd68d" stroke-width="1.5"></circle>`) },
  { art: icon(30, 30, svg`<rect x="3" y="3" width="24" height="24" rx="5" fill="#050505"></rect><path d="M15 6l7.5 4.3v8.7L15 23.5 7.5 19v-8.7Z" fill="#8f8f8f"></path><path d="M7.5 10.3h15L15 23.5Z" fill="#efefef"></path><path d="M7.5 10.3L15 14v9.5Z" fill="#bdbdbd"></path>`) },
  { active: true, art: icon(30, 30, svg`<defs><linearGradient id="ea" x1="0" y1="0" x2="1" y2=".3"><stop offset="0" stop-color="#1b9de2"></stop><stop offset=".6" stop-color="#34c3d0"></stop><stop offset="1" stop-color="#62dd58"></stop></linearGradient><linearGradient id="eb" x1="0" y1="0" x2="1" y2="1"><stop offset="0" stop-color="#168bdc"></stop><stop offset="1" stop-color="#0d4a96"></stop></linearGradient></defs>
    <path d="M0 14C1 6 7 0 15 0c9 0 15 6.5 15 13.5 0 5-4 7.5-8 7.5-4 0-6-1.5-5-3.5 2-3.5-1-8-6.5-8C5.5 9.5 1.5 12 0 14Z" fill="url(#ea)"></path>
    <path d="M0 15c0-3.5 5-7 10.5-6.5 4.5.4 8 3 7 7-3-2-6.5 0-6.5 4.5 0 5 5 8.5 9 9C9 32.5 0 25 0 15Z" fill="url(#ea)"></path>
    <path d="M0 15c1.5-3.5 5-5.5 9.5-5.5 3 0 6 1.5 7.5 4-5-.5-8 2.5-7.5 7C10 26 15 29 20 29 9 33 0 25.5 0 15Z" fill="#1478cf"></path>
    <path d="M10 19c0 6 4.5 10.2 10.5 10.2 3.5-1.2 6.5-4 8-7.2-6 3.5-14 1-15.5-5-2 .2-3 1-3 2Z" fill="url(#eb)"></path>`) },
  { art: icon(30, 30, svg`<rect width="30" height="30" fill="#000"></rect><rect x="8" y="8" width="13" height="13" stroke="#f1f1f1" stroke-width="1.5"></rect>${chromeMini}`) },
  { dot: true, art: icon(30, 30, svg`<path d="M22 0l7 3.5v23L22 30Z" fill="#2aa6f2"></path><path d="M22 0v8.5L4 23 0 20.5 20 .8Z" fill="#0f6fc0"></path><path d="M22 30v-8.5L4 7 0 9.5 20 29.2Z" fill="#1585d4"></path><path d="M22 8.5v13L14 15Z" fill="#f5e5cb"></path>`) },
  { dot: true, art: icon(36, 36, svg`<g transform="translate(0 3)"><path d="M4 31l2.2-7.5A13 13 0 1 1 11.5 29Z" stroke="#1b8a55" stroke-width="3" fill="#faf0df"></path><path d="M12.5 12c1-1.8 2.5-1.5 3-.2l.8 2c.3.8-1 1.5-.8 2 1 2 2.5 3.3 4.5 4 .6.2 1.2-1.5 2-1.2l2.2 1.2c1 .6 0 3-2 3.3-4.5.6-11-6-9.7-11.1Z" fill="#1b8a55"></path></g><circle cx="28" cy="7.5" r="10" fill="#107c10"></circle><text class="count" x="28" y="13">6</text>`) },
  { dot: true, art: icon(30, 30, chromeBody) },
  { dot: true, art: icon(36, 36, svg`<circle cx="17" cy="19" r="14.5" fill="#fff" stroke="#ddd"></circle>
    <g transform="translate(1 -1)" stroke-width="4" stroke-linecap="round"><path d="M13.5 12v5M7.5 17h5" stroke="#36c5f0"></path><path d="M19 10v7M24 17h-.5" stroke="#2eb67d"></path><path d="M19 23v6M19 23h6" stroke="#ecb22e"></path><path d="M13.5 23v5.5M7.5 23h5" stroke="#e01e5a"></path></g>
    <circle cx="29" cy="7" r="9" fill="#e01e5a" stroke="#5b1230" stroke-width="1.5"></circle><text class="count small" x="29" y="12">1</text>`) },
  { dot: true, art: icon(28, 28, svg`<defs><linearGradient id="pa" x1="0" y1="0" x2="1" y2="1"><stop offset="0" stop-color="#0b62c4"></stop><stop offset="1" stop-color="#7a4ba8"></stop></linearGradient></defs><rect x="1" y="1" width="26" height="26" rx="3" fill="url(#pa)"></rect><path d="M1 23L12 11.5c1.5-1.5 3-1.5 4.5 0L27 22v2a3 3 0 0 1-3 3H4a3 3 0 0 1-3-3Z" fill="#2fc0f4"></path><path d="M4 27l9-9c1-1 2-1 3 0l9 9Z" fill="#1266c6"></path><circle cx="20.5" cy="6" r="2.5" fill="#fff"></circle>`) },
  { dot: true, art: icon(30, 28, svg`<path d="M0 3a2 2 0 0 1 2-2h8l3 3H28a2 2 0 0 1 2 2v3H0Z" fill="#dd9b11"></path><rect y="4.5" width="30" height="22.5" rx="1.5" fill="#fcc73a"></rect><path d="M5 27v-4a3 3 0 0 1 3-3h14a3 3 0 0 1 3 3v4Z" fill="#1574cc"></path><path d="M9 23.5h12" stroke="#0a4f9b" stroke-width="1.5"></path>`) },
];

const tabs = [
  "1180, 5th Main Rd, Sector 6, HSR L",
  "1180, 5th Main Rd, Sector 6, HSR L",
  "1st Floor, 1167, 5th Main Rd, 7th s",
];

@customElement("app-root")
class AppRoot extends LitElement {
  static styles = css`
    :host { display: flex; flex-direction: column; width: 1919px; height: 1079px; overflow: hidden; background: #f7f7f7;
      font-family: "Segoe UI", "Open Sans", "Noto Sans", sans-serif; color: #1b1b1b; }
    * { box-sizing: border-box; }
    .icon { display: block; flex: none; overflow: visible; }
    .cell { display: flex; align-items: center; justify-content: center; flex: none; }

    .tabs { display: flex; height: 42px; background: #cdcdcd; align-items: stretch; flex: none; }
    .lead { width: 55px; display: flex; background: #f7f7f7; }
    .lead div { flex: 1; background: #cdcdcd; border-radius: 0 0 8px 0; display: flex; align-items: center; padding: 0 0 2px 16px; }
    .tab { display: flex; align-items: center; font-size: 14.5px; letter-spacing: -0.12px; padding-bottom: 1px; }
    .tab .title { position: relative; top: -1px; }
    .active { width: 300px; padding: 0 14px 1px 9px; background: #f7f7f7; border-radius: 10px 10px 0 0; }
    .active .title { margin-left: 12px; flex: 1; }
    .rest { flex: 1; display: flex; background: #f7f7f7; min-width: 0; }
    .strip { flex: 1; display: flex; background: #cdcdcd; border-radius: 0 0 0 8px; }
    .idle { width: 299px; padding-left: 11px; letter-spacing: -0.2px; }
    .idle .title { width: 225px; margin-left: 15px; white-space: nowrap;
      -webkit-mask-image: linear-gradient(90deg, #000 88%, transparent 100%); mask-image: linear-gradient(90deg, #000 88%, transparent 100%); }
    .idle .x { margin-left: 8px; }
    .idle .bar { width: 1px; height: 24px; background: #777; margin-left: 13px; }
    .plus { width: 41px; padding: 0 0 4px 1px; }
    .winctl { margin-left: auto; display: flex; width: 173px; }
    .winctl .cell { width: 58px; }

    .toolbar { display: flex; height: 51px; align-items: center; flex: none; }
    .omni { width: 1393px; height: 40px; margin-left: 5px; border: 1px solid #cfcfcf; border-radius: 20px; background: #fff;
      display: flex; align-items: center; padding: 0 10px 0 4px; }
    .url { margin-left: 8px; font-size: 17.5px; color: #5f5f5f; flex: 1; white-space: nowrap; letter-spacing: -0.53px; padding-bottom: 1px; }
    .url b { color: #111; font-weight: 400; }
    .omni .cell { width: 40px; }
    .omni .cell.info { width: 30px; height: 30px; border-radius: 50%; background: #f3f3f3; }
    .omni .cell:last-child { width: 24px; margin-left: 8px; }
    .tool { width: 45px; }
    .vbar { width: 1px; height: 20px; background: #c9c9c9; margin: 0 2px 0 3px; }

    .page { margin: -1px 3px 0 4px; height: 925px; flex: none; border: 1px solid #dcdcdc; border-radius: 12px; background: #f9f9f9; overflow: hidden;
      box-shadow: 0 0 2px rgba(0, 0, 0, 0.12); display: flex; flex-direction: column; }
    .banner { height: 80px; flex: none; display: flex; align-items: center; padding: 0 34px; gap: 14px;
      background: linear-gradient(90deg, #ff9900, #ffb300 50%, #ffc800); box-shadow: 0 3px 8px rgba(0, 0, 0, 0.16); position: relative; color: #fff; }
    .banner .icon { filter: drop-shadow(0 2px 2px rgba(0, 0, 0, 0.2)); }
    .brand { font-size: 29px; font-weight: 800; letter-spacing: 0.75px; text-shadow: 0 1px 2px rgba(0, 0, 0, 0.1); white-space: nowrap;
      -webkit-text-stroke: 0.6px #fff; }
    .welcome { height: 171px; flex: none; border-bottom: 1px solid #d3d5d9; padding-top: 28px; display: flex; flex-direction: column; align-items: center; }
    .hello { display: flex; align-items: center; height: 50px; color: #1c398e; font-weight: 700; white-space: nowrap; }
    .hello .big { font-size: 37px; margin-left: 11px; letter-spacing: -0.7px; padding-top: 1px; }
    .hello .link { font-size: 29px; margin-left: 9px; padding-bottom: 2px; text-decoration: underline; text-decoration-thickness: 3px; text-underline-offset: 4px; }
    .where { display: flex; align-items: center; height: 34px; margin-top: 17px; padding-left: 7px; font-size: 22px; color: #364153; white-space: nowrap; letter-spacing: -0.56px; }
    .where .label { margin-left: 15px; }
    .where b { font-weight: 600; margin-left: 7px; letter-spacing: -0.8px; }

    .body { display: grid; grid-template-columns: 920px 920px; gap: 30px; padding: 20px; align-items: start; }
    .place { display: flex; flex-direction: column; gap: 20px; color: #364153; font-size: 20px; letter-spacing: -0.38px; }
    .title-row { display: flex; height: 46px; align-items: center; gap: 15px; padding-left: 5px; }
    .heading { font-size: 36px; font-weight: 800; color: #1c398e; letter-spacing: -0.1px; white-space: nowrap; -webkit-text-stroke: 0.6px #1c398e; padding-top: 2px; }
    .row { display: flex; align-items: center; height: 30px; white-space: nowrap; letter-spacing: -0.78px; }
    .row b { font-weight: 700; margin-right: 6px; }
    .row .wide { letter-spacing: -0.45px; }
    .row .net { margin-left: 10px; margin-right: 10px; }
    .actions { display: flex; gap: 20px; margin-top: -1px; }
    .btn { height: 50px; border: 0; border-radius: 5px; font: inherit; color: #fff; padding: 0; letter-spacing: inherit;
      box-shadow: 0 1px 3px rgba(0, 0, 0, 0.2); }
    .go { width: 180px; background: #00a63e; font-weight: 600; letter-spacing: -0.48px; }
    .back { width: 101px; background: #99a1af; font-weight: 500; }
    .frame { position: relative; width: 920px; height: 500px; border: 1px solid #000; border-radius: 5px; overflow: hidden; }
    .zoom { position: absolute; left: 12px; top: 12px; width: 42px; height: 79px; border: 2px solid rgba(0, 0, 0, 0.22); border-radius: 5px; background: #fff;
      background-clip: padding-box; display: flex; flex-direction: column; }
    .zoom .cell { height: 37px; padding-left: 2px; }
    .zoom .cell:first-child { border-bottom: 1px solid #ccc; height: 38px; }
    .credit { position: absolute; right: 0; bottom: 0; width: 293px; height: 21px; background: rgba(255, 255, 255, 0.8); display: flex; align-items: center;
      padding-left: 7px; font: 15px "Liberation Sans", Arial, sans-serif; color: #333; white-space: nowrap; letter-spacing: -0.02px; }
    .credit .icon { margin-right: 4px; }
    .credit a { color: #0078a8; }

    .taskbar { height: 59px; margin-top: auto; flex: none; display: flex; align-items: center; border-top: 1px solid #bdb3a5;
      background: linear-gradient(90deg, #f5e4d2, #f8e6cc 9%, #f4e4d3 28%, #fae7c9 46%, #fae7c9 58%, #f5e5d1 72%, #f9e5d8 86%, #f8e5d8); }
    .weather { display: flex; width: 338px; padding-left: 25px; gap: 7px; align-items: center; font-size: 15px; line-height: 20px; letter-spacing: -0.18px; }
    .lines { padding-bottom: 2px; }
    .muted { color: #5c5852; }
    .search { margin-left: 18px; width: 273px; height: 39px; border-radius: 20px; background: #fdf7ef; border: 1px solid #dccdb8; display: flex; align-items: center;
      padding: 0 13px 0 12px; font-size: 17px; color: #5b5b5b; }
    .search .label { margin-left: 13px; flex: 1; letter-spacing: -0.35px; }
    .apps { display: flex; margin-left: 3px; }
    .app { width: 55px; height: 58px; display: flex; flex-direction: column; align-items: center; }
    .plate { width: 49px; height: 48px; margin-top: 5px; display: flex; align-items: center; justify-content: center; border-radius: 5px; }
    .plate.on { background: #fdf3e3; box-shadow: 0 0 1px 1px rgba(200, 180, 150, 0.25); }
    .mark { width: 8px; height: 4px; border-radius: 2px; margin-top: -4px; background: transparent; }
    .mark.dot { background: #8b8478; }
    .mark.on { width: 20px; background: #107c10; }
    .tray { margin-left: auto; display: flex; align-items: center; font-size: 15px; line-height: 20px; }
    .lang { width: 58px; text-align: center; letter-spacing: -0.1px; }
    .clock { width: 92px; text-align: right; margin-right: 11px; padding-bottom: 2px; letter-spacing: 0.08px; }
    .bell { margin-right: 23px; }
    text { font-family: "Open Sans", sans-serif; text-anchor: middle; fill: #fff; }
    .calendar { font-size: 14px; font-weight: 700; fill: #3d6fd9; }
    .prompt { font-size: 8.5px; font-weight: 700; }
    .count { font-size: 15px; }
    .count.small { font-size: 13px; }
    .w52 { width: 52px; }
    .w50 { width: 50px; }
    .w44 { width: 44px; }
    .w42 { width: 42px; }
    .w40 { width: 40px; }
    .w36 { width: 36px; }
    .w34 { width: 34px; }
    .w25 { width: 25px; }
    .w8 { width: 8px; }
    .w5 { width: 5px; }
    .w1 { width: 1px; }
  `;

  render() {
    return html`
      <div class="tabs">
        <div class="lead"><div>${icon(18, 18, svg`<rect x=".8" y=".8" width="16.4" height="16.4" rx="3" stroke="#111" stroke-width="1.5"></rect><path d="M1 3.5a2.5 2.5 0 0 1 2.5-2.5h11A2.5 2.5 0 0 1 17 3.5V5.5H1Z" fill="#111"></path><path d="M5.5 5v12" stroke="#111" stroke-width="1.3"></path>`)}</div></div>
        <div class="tab active">
          ${icon(20, 20, svg`<defs><linearGradient id="va" x1="0" y1="0" x2=".6" y2="1"><stop offset="0" stop-color="#41d1ff"></stop><stop offset="1" stop-color="#bd34fe"></stop></linearGradient><linearGradient id="vb" x1="0" y1="0" x2="0" y2="1"><stop offset="0" stop-color="#ffea83"></stop><stop offset=".4" stop-color="#ffc61c"></stop><stop offset="1" stop-color="#ffa800"></stop></linearGradient></defs><path d="M19.8 3.2L10.5 19.7c-.2.3-.7.3-.9 0L.2 3.2c-.2-.4.1-.8.5-.7l9.4 1.7 9.2-1.7c.4-.1.7.3.5.7Z" fill="url(#va)"></path><path d="M14.4.2L7.6 1.5l-.5 7.1 2-.4-.6 2.7 1.3-.4-1.1 5.2 3.9-7.2-1.5.3 3-8.2Z" fill="url(#vb)"></path>`)}
          <span class="title">Spots Alert</span>${closeX}
        </div>
        <div class="rest"><div class="strip">
          ${tabs.map((t) => html`<div class="tab idle">${mapsPin}<span class="title">${t}</span><span class="x">${closeX}</span><span class="bar"></span></div>`)}
          <div class="cell plus">${icon(18, 18, line("M9 .8v16.4M.8 9h16.4", 1.4))}</div>
          <div class="winctl">
            <div class="cell">${icon(13, 13, line("M.5 6.5h12", 1.1, "#111"))}</div>
            <div class="cell">${icon(13, 13, svg`<rect x=".6" y="2.8" width="9.8" height="9.8" rx="1.5" stroke="#111" stroke-width="1.1"></rect><path d="M3 .7h7a2.5 2.5 0 0 1 2.5 2.5V10" stroke="#111" stroke-width="1.1"></path>`)}</div>
            <div class="cell">${icon(13, 13, line("M.5.5l12 12M12.5.5l-12 12", 1.1, "#111"))}</div>
          </div>
        </div></div>
      </div>

      <div class="toolbar">
        <div class="cell w50">${icon(20, 18, line("M19 9H1.5M9 1L1.2 9 9 17", 1.5))}</div>
        <div class="cell w40">${icon(20, 20, line("M18.8 10A8.8 8.8 0 1 1 15.5 3.2M18.3 1v5h-5", 1.5))}</div>
        <div class="w5"></div>
        <div class="omni">
          <div class="cell info">${icon(18, 18, svg`<circle cx="9" cy="9" r="8.2" stroke="#6a6a6a" stroke-width="1.3"></circle><path d="M9 8v5M9 5v1.3" stroke="#6a6a6a" stroke-width="1.4"></path>`)}</div>
          <div class="url"><b>localhost</b>:5174/place/519f3832e80369534059994bcc1db3da2940f00102f901a81fe645000000009203094c6f636f2042656172</div>
          <div class="cell">${icon(12, 16, svg`<path d="M6 15.3C3.5 11.5.7 9 .7 5.9a5.3 5.3 0 0 1 10.6 0C11.3 9 8.5 11.5 6 15.3Z" stroke="#6a6a6a" stroke-width="1.2"></path><circle cx="6" cy="6" r="1.7" fill="#6a6a6a"></circle>`)}</div>
          <div class="cell">${icon(20, 19, line("M10 1l2.7 5.7 6.2.8-4.5 4.3 1.1 6.2L10 15l-5.5 3 1.1-6.2L1.1 7.5l6.2-.8Z", 1.3, "#6a6a6a"))}</div>
        </div>
        <div class="w8"></div>
        <div class="cell tool">${icon(20, 20, svg`<rect width="20" height="20" rx="1" fill="#d94635"></rect><g stroke="#fff" stroke-width="1.2"><ellipse cx="10" cy="9.5" rx="8" ry="3"></ellipse><ellipse cx="10" cy="9.5" rx="8" ry="3" transform="rotate(60 10 9.5)"></ellipse><ellipse cx="10" cy="9.5" rx="8" ry="3" transform="rotate(120 10 9.5)"></ellipse></g><ellipse cx="11" cy="12.5" rx="2.2" ry="3.3" fill="#1d0c0a"></ellipse><path d="M8 10.5l6 5M14.5 9.5l-6.5 6" stroke="#1d0c0a"></path>`)}</div>
        <div class="cell tool">${icon(18, 17, svg`<path d="M1 4h3.5V2.5H6V1h6v1.5h1.5V4H17a1 1 0 0 1 1 1v11a1 1 0 0 1-1 1H1a1 1 0 0 1-1-1V5a1 1 0 0 1 1-1Z" fill="#999"></path><circle cx="9" cy="9.5" r="4.5" fill="#f7f7f7"></circle><circle cx="9" cy="9.5" r="3.3" fill="#777"></circle><circle cx="9" cy="9.5" r="1.5" fill="#f7f7f7"></circle>`)}</div>
        <div class="cell tool">${icon(20, 20, svg`<circle cx="10" cy="10.5" r="9" stroke="#d5d5d5" stroke-width="1.5"></circle><circle cx="10" cy="10.5" r="5.5" stroke="#cfcfcf" stroke-width="1.5"></circle><circle cx="10" cy="10.5" r="2.6" fill="#b9b9b9"></circle><circle cx="5" cy="2" r="2.2" fill="#777"></circle><circle cx="14" cy="6" r="2.2" fill="#666"></circle>`)}</div>
        <div class="cell tool">${icon(20, 20, line("M4 4h3.6a2.4 2.4 0 1 1 4.8 0H17v4.6h-1.2a2.3 2.3 0 1 0 0 4.6H17v3.6h-4.6a2.4 2.4 0 1 1-4.8 0H4v-3.9a2.4 2.4 0 1 1 0-4.7Z", 1.5))}</div>
        <div class="vbar"></div>
        <div class="cell tool">${icon(21, 19, line("M12 6.5L9.5 1 7 6.5l-6 .8 4.4 4.2L4.3 18l5-2.8M13 7h7M12 11.5h8M14 16h6", 1.5))}</div>
        <div class="cell tool">${icon(20, 19, line("M1.5 8.5C0 4 3 1.2 5.8 1.2c2 0 3.3 1 4.2 2.5.9-1.5 2.2-2.5 4.2-2.5 2.8 0 5.8 2.8 4.3 7.3M1 11h4l2-4 3.2 6.5L12.5 9l1.2 2H19M4.5 13.5L10 18.2l5.5-4.7", 1.5))}</div>
        <div class="cell w44">${icon(28, 30, svg`<defs><clipPath id="face"><circle cx="15" cy="15" r="15"></circle></clipPath></defs><g clip-path="url(#face)"><rect width="30" height="30" fill="#eadfd5"></rect><path d="M0 30C2 24 8 23 15 23s13 1 15 7Z" fill="#f6f6fa"></path><path d="M10 18h10v6l-5 4-5-4Z" fill="#7a5344"></path><ellipse cx="15" cy="12.5" rx="8.2" ry="10.5" fill="#8a6252"></ellipse><path d="M6 9C6 2 10 0 15 0s9 2 9 9c-1-3-2-4.500-3-5-4 .8-8 .8-12 0C8 4.500 7 6 6 9Z" fill="#40332e"></path><path d="M10 11h3.5M16.5 11H20" stroke="#3a231c" stroke-width="1.2"></path><path d="M12.5 17.5h5" stroke="#6a3a33" stroke-width="1.3"></path><path d="M13.5 25.5h3l1 4.5h-5Z" fill="#b33c55"></path></g>`, "0 0 30 30")}</div>
        <div class="cell tool">${icon(18, 4, svg`<circle cx="2" cy="2" r="1.6" fill="#111"></circle><circle cx="9" cy="2" r="1.6" fill="#111"></circle><circle cx="16" cy="2" r="1.6" fill="#111"></circle>`)}</div>
        <div class="cell w52">${copilot(28)}</div>
      </div>

      <div class="page">
        <div class="banner">
          ${icon(22, 30, svg`<path d=${pinPath} fill="#fff"></path>`, "0 0 384 512")}
          <span class="brand">Spots Alert</span>
        </div>
        <div class="welcome">
          <div class="hello">
            ${icon(38, 34, svg`<path d=${mapPath} fill="#00a63e"></path>`, "0 0 576 512")}
            <span class="big">Welcome to</span><span class="link">Spots Alert</span>
          </div>
          <div class="where">
            ${icon(14, 23, svg`<path d="M6.3 11h1.6l-.3 11.5h-1Z" fill="#8f8fa3"></path><circle cx="7" cy="6.5" r="6.5" fill="#f2316c"></circle><ellipse cx="9" cy="4" rx="2" ry="1.5" fill="#ffb3c9"></ellipse>`)}
            <span class="label">Your Location:</span><b>12.9114, 77.6326</b>
          </div>
        </div>
        <div class="body">
          <div class="place">
            <div class="title-row">${icon(28, 37, svg`<path d=${pinPath} fill="#fb2c36"></path>`, "0 0 384 512")}<span class="heading">Loco Bear</span></div>
            <div class="row"><b class="wide">Category:</b>entertainment, entertainment.theme_park</div>
            <div class="row"><b>Distance:</b>1.91 km</div>
            <div class="row">${icon(20, 17, svg`<g stroke="#364153" stroke-width="2"><rect x="7" y="1.5" width="6" height="4"></rect><rect x="2" y="11.5" width="5" height="4"></rect><rect x="13" y="11.5" width="5" height="4"></rect><path d="M0 8.5h20M10 6v2M4.5 9v2M15.5 9v2" stroke-width="1.7"></path></g>`)}<b class="net">Network:</b>4g</div>
            <div class="actions"><button class="btn go">Start Journey</button><button class="btn back">Back</button></div>
          </div>
          <div class="frame">
            <street-map></street-map>
            <div class="zoom">
              <div class="cell">${icon(16, 16, svg`<path d="M8 .5v15M.5 8h15" stroke="#000" stroke-width="2.2"></path>`)}</div>
              <div class="cell">${icon(16, 16, svg`<path d="M.5 8h15" stroke="#000" stroke-width="2.2"></path>`)}</div>
            </div>
            <div class="credit">${icon(15, 10, svg`<rect width="15" height="5" fill="#4c7be1"></rect><rect y="5" width="15" height="5" fill="#ffd500"></rect>`)}<span><a>Leaflet</a> | © OpenStreetMap contributors</span></div>
          </div>
        </div>
      </div>

      <div class="taskbar">
        <div class="weather">
          ${icon(32, 38, svg`<defs><linearGradient id="cl" x1="0" y1="0" x2="0" y2="1"><stop offset="0" stop-color="#7ea6ea"></stop><stop offset="1" stop-color="#c9dcfb"></stop></linearGradient></defs><circle cx="22" cy="16" r="7" fill="#f4761d"></circle><path d="M7 33.5a6.5 6.5 0 0 1-1-13A9.5 9.5 0 0 1 23.5 19a7.3 7.3 0 0 1-.5 14.5Z" fill="url(#cl)"></path><circle cx="24" cy="7.5" r="10" fill="#c42b1c"></circle><text class="count" x="24" y="13">6</text>`)}
          <div class="lines"><div>29°C</div><div class="muted">Mostly cloudy</div></div>
        </div>
        ${icon(29, 29, svg`<defs><linearGradient id="wn" x1="0" y1="0" x2="1" y2="1"><stop offset="0" stop-color="#4cc9fb"></stop><stop offset="1" stop-color="#0268cf"></stop></linearGradient></defs><path d="M1 0h13v14H0V1a1 1 0 0 1 1-1ZM15 0h13a1 1 0 0 1 1 1v13H15ZM0 15h14v14H1a1 1 0 0 1-1-1ZM15 15h14v13a1 1 0 0 1-1 1H15Z" fill="url(#wn)"></path>`)}
        <div class="search">
          ${icon(19, 19, svg`<circle cx="8" cy="8" r="6.7" stroke="#222" stroke-width="2"></circle><path d="M13 13l5 5" stroke="#222" stroke-width="2.3" stroke-linecap="round"></path>`)}
          <span class="label">Search</span>
          ${icon(52, 30, svg`<path d="M3 25c4-1 9-4 12-7l9-12c3-1 5 2 5 5l-1 14h-1.3l-.5-11C21 18 17 23 13 25.5c-4 1-7 .8-10-.5Z" fill="#d7a63c"></path><path d="M15 17l9-11 2 2-9 12Z" fill="#f0cd72"></path><path d="M39 0l2 2h4l2-2 .5 8 3.5 2-1 6-3 0 1.5 11c-2 3-7 3-9.5 0l1-10-3-3 0-5 2.5-1Z" fill="#cf7ae0"></path><path d="M39.5 14l7 2 2 11c-2 3-7 3-9.5 0Z" fill="#7d529f"></path><circle cx="41" cy="19" r="1" fill="#f0b5f5"></circle><circle cx="44.5" cy="22" r="1" fill="#f0b5f5"></circle><circle cx="42" cy="25" r="1" fill="#f0b5f5"></circle>`)}
        </div>
        <div class="apps">
          ${apps.map((a) => html`<div class="app"><div class="plate ${a.active ? "on" : ""}">${a.art}</div><div class="mark ${a.active ? "on" : a.dot ? "dot" : ""}"></div></div>`)}
        </div>
        <div class="tray">
          <div class="cell w40">${icon(14, 8, line("M1 7l6-6 6 6", 1.7))}</div>
          <div class="cell w42">${icon(20, 21, svg`<path d="M9 0c3 2 5.5 2.5 9 2.5V10c0 5-4 8-9 10C4 18 0 15 0 10V2.5C3.5 2.5 6 2 9 0Z" fill="#1479cf"></path><path d="M9 0v10H0V2.5C3.5 2.5 6 2 9 0Z" fill="#37b3f3"></path><circle cx="13.5" cy="14.5" r="6" fill="#0f8a16"></circle><path d="M10.8 14.5l2 2 3.5-3.7" stroke="#fff" stroke-width="1.5"></path>`)}</div>
          <div class="cell w36">${icon(20, 15, svg`<rect x=".8" y=".8" width="18.4" height="13.4" rx="2" stroke="#222" stroke-width="1.4"></rect><path d="M4 4.5h12M4 7.5h12" stroke="#222" stroke-width="1.5" stroke-dasharray="1.7 1.7"></path><path d="M5 11h10" stroke="#222" stroke-width="1.3"></path>`)}</div>
          <div class="w1"></div>
          <div class="lang cell"><div>ENG<br />IN</div></div>
          <div class="cell w36">${icon(20, 15, svg`<path d="M.8 6a13 13 0 0 1 18.4 0M3.5 9a9 9 0 0 1 13 0M6.5 11.8a5 5 0 0 1 7 0" stroke="#222" stroke-width="1.4"></path><circle cx="10" cy="13.3" r="1.6" fill="#222"></circle>`)}</div>
          <div class="cell w25">${icon(19, 15, svg`<path d="M.8 5.2h3L7.5 1.5v12L3.8 9.8h-3Z" stroke="#222" stroke-width="1.2" stroke-linejoin="round"></path><path d="M10 5a3.5 3.5 0 0 1 0 5M12.5 3a6.5 6.5 0 0 1 0 9" stroke="#222" stroke-width="1.2"></path><path d="M15 1a9.5 9.5 0 0 1 0 13" stroke="#aaa" stroke-width="1.2"></path>`)}</div>
          <div class="cell w34">${icon(21, 12, svg`<rect x=".7" y=".7" width="16.6" height="10.6" rx="2.5" stroke="#222" stroke-width="1.4"></rect><rect x="2.5" y="2.5" width="6.5" height="7" fill="#222"></rect><path d="M19 4v4" stroke="#222" stroke-width="2"></path>`)}</div>
          <div class="clock">15:09<br />09-07-2025</div>
          <div class="bell">${icon(18, 20, svg`<path d="M8 2a6 6 0 0 1 6 6v4l1.5 3.5H.5L2 12V8a6 6 0 0 1 6-6ZM5.5 17h5a2.5 2.5 0 0 1-5 0Z" fill="#1c1c1c"></path><path d="M12 1h4.5L12.5 6H17" stroke="#1c1c1c" stroke-width="1.5"></path><path d="M6 7h4L6 12h4" stroke="#f8e5d8" stroke-width="1.4"></path>`)}</div>
        </div>
      </div>
    `;
  }
}
